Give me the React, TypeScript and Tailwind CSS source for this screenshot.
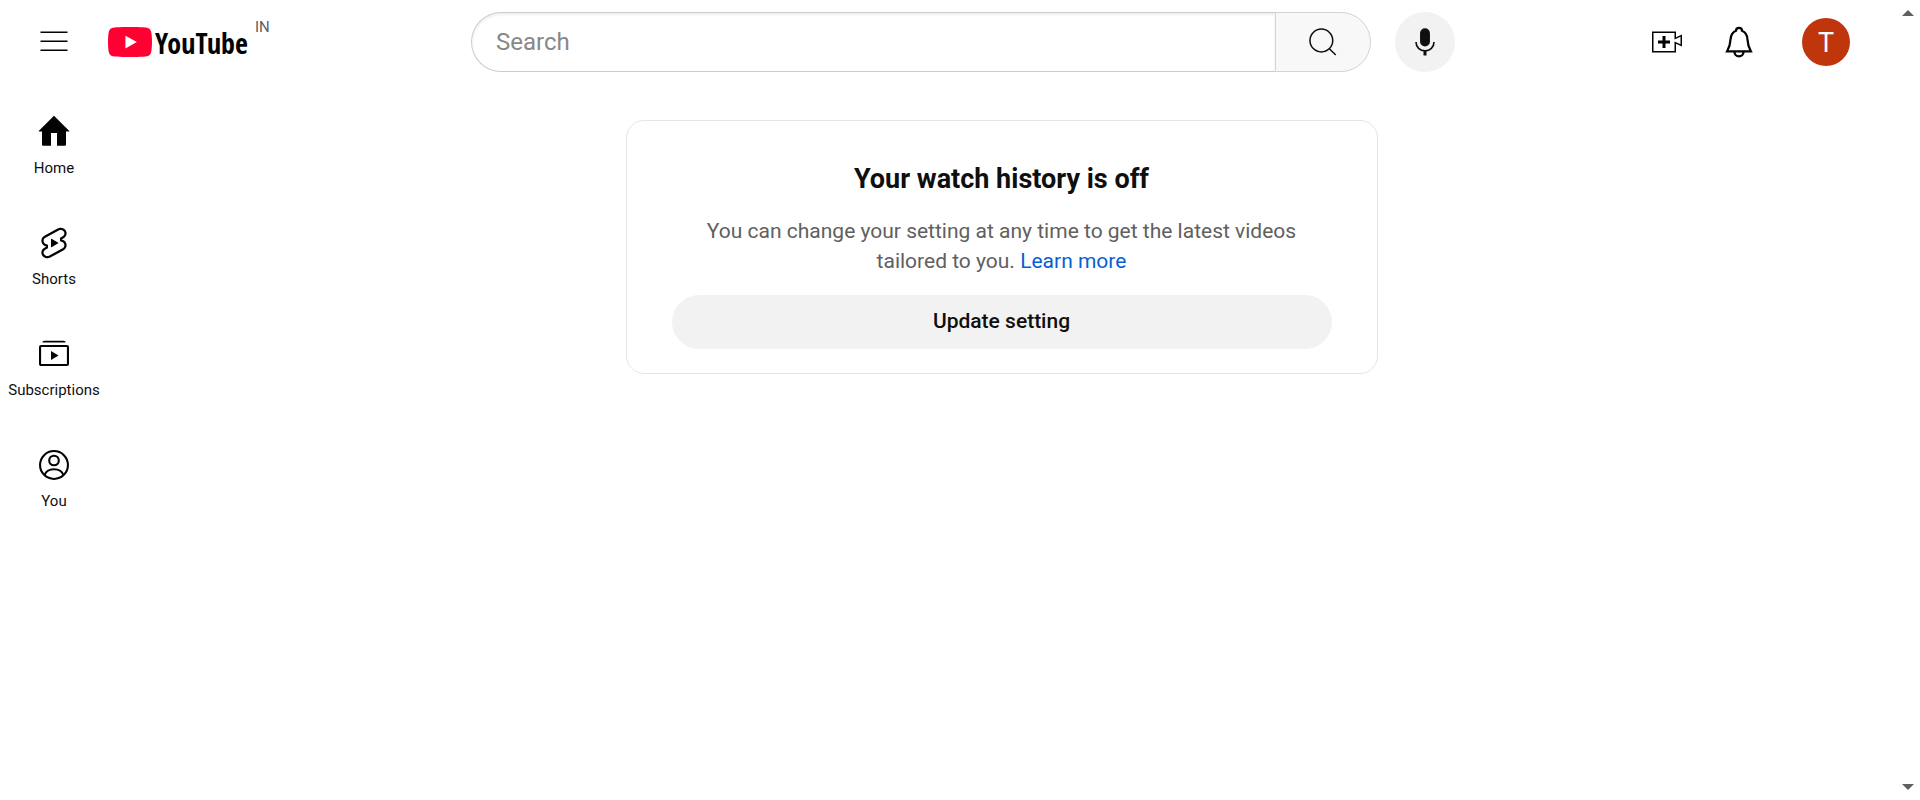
import React from "react";

function MenuIcon() {
  return (
    <svg viewBox="0 0 24 24" className="size-9" fill="#030303" aria-hidden="true">
      <path d="M21 6H3V5h18v1zm0 5H3v1h18v-1zm0 6H3v1h18v-1z" />
    </svg>
  );
}

function LogoMark() {
  return (
    <svg viewBox="0 0 29 20" className="h-[30px] w-11" preserveAspectRatio="none" aria-hidden="true">
      <path
        fill="#FF0033"
        d="M14.5 20s9.1 0 11.3-.5c1.3-.3 2.2-1.3 2.6-2.5.6-2.3.6-7 .6-7s0-4.7-.6-7c-.4-1.200-1.300-2.200-2.600-2.500C23.600 0 14.500 0 14.500 0S5.400 0 3.200.5C1.900.8.900 1.800.600 3 0 5.300 0 10 0 10s0 4.700.600 7c.300 1.200 1.300 2.200 2.600 2.500 2.200.5 11.300.5 11.300.5z"
      />
      <path fill="#fff" d="M19 10l-7.500-4.250v8.500z" />
    </svg>
  );
}

function SearchIcon() {
  return (
    <svg viewBox="0 0 24 24" className="size-9" fill="none" stroke="#0f0f0f" strokeWidth="1" aria-hidden="true">
      <circle cx="10.900" cy="11" r="7.600" />
      <path d="M16.200 16.500l4.300 4.200" />
    </svg>
  );
}

function MicIcon() {
  return (
    <svg viewBox="0 0 24 24" className="size-9" fill="none" stroke="#0f0f0f" aria-hidden="true">
      <rect x="8.700" y="2.800" width="6.600" height="12.200" rx="3.300" fill="#0f0f0f" stroke="none" />
      <path d="M6 12c0 3.400 2.600 5.900 6 5.900s6-2.500 6-5.900" strokeWidth="1.100" />
      <path d="M12 17.500V21" strokeWidth="2" />
    </svg>
  );
}

function CreateIcon() {
  return (
    <svg viewBox="0 0 24 24" className="size-9" fill="#030303" aria-hidden="true">
      <path d="M14 13h-3v3H9v-3H6v-2h3V8h2v3h3v2zm3-7H3v12h14v-6.390l4 1.830V8.560l-4 1.830V6m1-1v3.830L22 7v8l-4-1.830V19H2V5h16z" />
    </svg>
  );
}

function BellIcon() {
  return (
    <svg viewBox="0 0 24 24" className="size-9" fill="none" stroke="#030303" strokeWidth="1.500" aria-hidden="true">
      <path d="M10 4.500c0-1.100.800-1.900 2-1.900s2 .800 2 1.900c2.200.900 3.400 2.800 3.600 5.500.200 3.700.500 5 2.300 8.200H4.100c1.800-3.200 2.100-4.500 2.300-8.200.200-2.700 1.400-4.600 3.600-5.500z" />
      <path d="M9 18.500c0 1.800 1.200 3.100 3 3.100s3-1.300 3-3.100" />
    </svg>
  );
}

function HomeIcon() {
  return (
    <svg viewBox="0 0 24 24" className="size-9" fill="#030303" aria-hidden="true">
      <path d="M12 1.200L1.800 11.300v.4H4v8.600c0 .500.400.900.900.900H10v-8.500h4v8.500h5.100c.500 0 .900-.400.900-.900v-8.600h2.200v-.4z" />
    </svg>
  );
}

function ShortsIcon() {
  return (
    <svg viewBox="0 0 24 24" className="size-9" fill="#030303" aria-hidden="true">
      <path
        fillRule="evenodd"
        clipRule="evenodd"
        d="m7.61 15.719.392-.22v-2.24l-.534-.228-.942-.404c-.869-.372-1.4-1.15-1.446-1.974-.047-.823.39-1.642 1.203-2.097h.001L15.13 3.59c1.231-.689 2.785-.27 3.466.833.652 1.058.313 2.452-.879 3.118l-1.327.743-.388.217v2.243l.53.227.942.404c.869.372 1.4 1.15 1.446 1.974.047.823-.39 1.642-1.203 2.097l-.002.001-8.845 4.964-.001.001c-1.231.688-2.784.269-3.465-.834-.652-1.058-.313-2.451.879-3.118l1.327-.742Zm1.993 6.002c-1.905 1.066-4.356.46-5.475-1.355-1.057-1.713-.548-3.89 1.117-5.025a4.14 4.14 0 01.305-.189l1.327-.742-.942-.404a4.055 4.055 0 01-.709-.391c-.963-.666-1.578-1.718-1.644-2.877-.08-1.422.679-2.77 1.968-3.49l8.847-4.966c1.905-1.066 4.356-.46 5.475 1.355 1.057 1.713.548 3.89-1.117 5.025a4.074 4.074 0 01-.305.19l-1.327.742.942.403c.253.109.49.24.709.392.963.666 1.578 1.717 1.644 2.876.08 1.423-.679 2.77-1.968 3.491l-8.847 4.965ZM10 14.567a.25.25 0 00.374.217l4.45-2.567a.25.25 0 000-.433l-4.45-2.567a.25.25 0 00-.374.216v5.134Z"
      />
    </svg>
  );
}

function SubscriptionsIcon() {
  return (
    <svg viewBox="0 0 24 24" className="size-9" fill="none" stroke="#030303" strokeWidth="1.400" aria-hidden="true">
      <rect x="2.700" y="6.700" width="18.600" height="12.600" rx=".6" />
      <path d="M4.300 4.300c0-.7.500-1.200 1.200-1.200h13c.7 0 1.200.5 1.200 1.200z" fill="#030303" stroke="none" />
      <path d="M10 10v6l5-3z" fill="#030303" stroke="none" />
    </svg>
  );
}

function YouIcon() {
  return (
    <svg viewBox="0 0 24 24" className="size-9" fill="none" stroke="#030303" strokeWidth="1.400" aria-hidden="true">
      <circle cx="12" cy="12" r="9.300" />
      <circle cx="12" cy="9" r="3.200" />
      <path d="M5.800 18.700c.7-2.300 3.200-3.900 6.200-3.900s5.500 1.600 6.200 3.900" />
    </svg>
  );
}

const navItems = [
  { label: "Home", Icon: HomeIcon },
  { label: "Shorts", Icon: ShortsIcon },
  { label: "Subscriptions", Icon: SubscriptionsIcon },
  { label: "You", Icon: YouIcon },
];

function Header() {
  return (
    <header className="flex h-21 items-center justify-between gap-4 pl-9 pr-[45px]">
      <div className="flex w-[241px] shrink-0 items-center gap-9">
        <button type="button" aria-label="Guide">
          <MenuIcon />
        </button>
        <a href="#home" className="flex items-center gap-[3px]">
          <LogoMark />
          <span className="pt-0.5 font-['Noto_Sans_ExtraCondensed','Open_Sans_Condensed','Roboto_Condensed','Roboto',sans-serif] text-[28px] leading-[30px] font-semibold text-[#030303]">
            YouTube
          </span>
          <span className="-mt-1.5 self-start pl-1 text-[15px] leading-none text-[#606060]">IN</span>
        </a>
      </div>
      <div className="flex w-[984px] min-w-0 items-center gap-6">
        <form className="flex h-15 min-w-0 flex-1" onSubmit={(e: React.FormEvent) => e.preventDefault()}>
          <input
            type="text"
            aria-label="Search"
            placeholder="Search"
            className="min-w-0 flex-1 rounded-l-full border border-r-0 border-[#ccc] bg-white pl-6 text-2xl text-[#111] shadow-[inset_0_2px_3px_#eee] outline-none placeholder:text-[#888]"
          />
          <button
            type="submit"
            aria-label="Search"
            className="flex w-24 items-center justify-center rounded-r-full border border-[#d3d3d3] bg-[#f8f8f8]"
          >
            <SearchIcon />
          </button>
        </form>
        <button
          type="button"
          aria-label="Search with your voice"
          className="flex size-15 shrink-0 items-center justify-center rounded-full bg-[#f2f2f2]"
        >
          <MicIcon />
        </button>
      </div>
      <div className="flex shrink-0 items-center">
        <button type="button" aria-label="Create">
          <CreateIcon />
        </button>
        <button type="button" aria-label="Notifications" className="ml-9">
          <BellIcon />
        </button>
        <button
          type="button"
          aria-label="Account"
          className="ml-[45px] flex size-12 items-center justify-center rounded-full bg-[#bf360c] pt-0.5 text-[27px] leading-none text-white"
        >
          T
        </button>
      </div>
    </header>
  );
}

function Sidebar() {
  return (
    <nav className="flex w-27 shrink-0 flex-col pt-1.5">
      {navItems.map(({ label, Icon }) => (
        <a key={label} href={`#${label.toLowerCase()}`} className="flex flex-col items-center gap-2 pt-6 pb-[22px]">
          <Icon />
          <span className="text-[15px] leading-[21px]">{label}</span>
        </a>
      ))}
    </nav>
  );
}

function HistoryCard() {
  return (
    <section className="flex w-full max-w-[752px] flex-col rounded-[18px] border border-[#e5e5e5] px-[45px] pt-[37px] pb-6 text-center">
      <h1 className="text-[27px] leading-[42px] font-bold">Your watch history is off</h1>
      <p className="mt-4 px-6 text-[21px] leading-[30px] text-[#606060]">
        You can change your setting at any time to get the latest videos tailored to you.{" "}
        <a href="#learn-more" className="text-[#065fd4]">
          Learn more
        </a>
      </p>
      <button type="button" className="mt-[19px] h-[54px] rounded-full bg-[#f2f2f2] text-[21px] font-medium">
        Update setting
      </button>
    </section>
  );
}

function ScrollTrack() {
  return (
    <div className="flex w-[25px] shrink-0 flex-col items-center justify-between py-[10px]">
      <svg viewBox="0 0 12 6" className="h-1.5 w-3" fill="#606060" aria-hidden="true">
        <path d="M6 0l6 6H0z" />
      </svg>
      <svg viewBox="0 0 12 6" className="h-1.5 w-3" fill="#606060" aria-hidden="true">
        <path d="M0 0h12L6 6z" />
      </svg>
    </div>
  );
}

export default function App() {
  return (
    <div className="flex min-h-screen bg-white font-['Roboto',sans-serif] text-[#0f0f0f]">
      <div className="min-w-0 flex-1">
        <Header />
        <div className="flex">
          <Sidebar />
          <main className="flex min-w-0 flex-1 items-start justify-center px-6 pt-9">
            <HistoryCard />
          </main>
        </div>
      </div>
      <ScrollTrack />
    </div>
  );
}
